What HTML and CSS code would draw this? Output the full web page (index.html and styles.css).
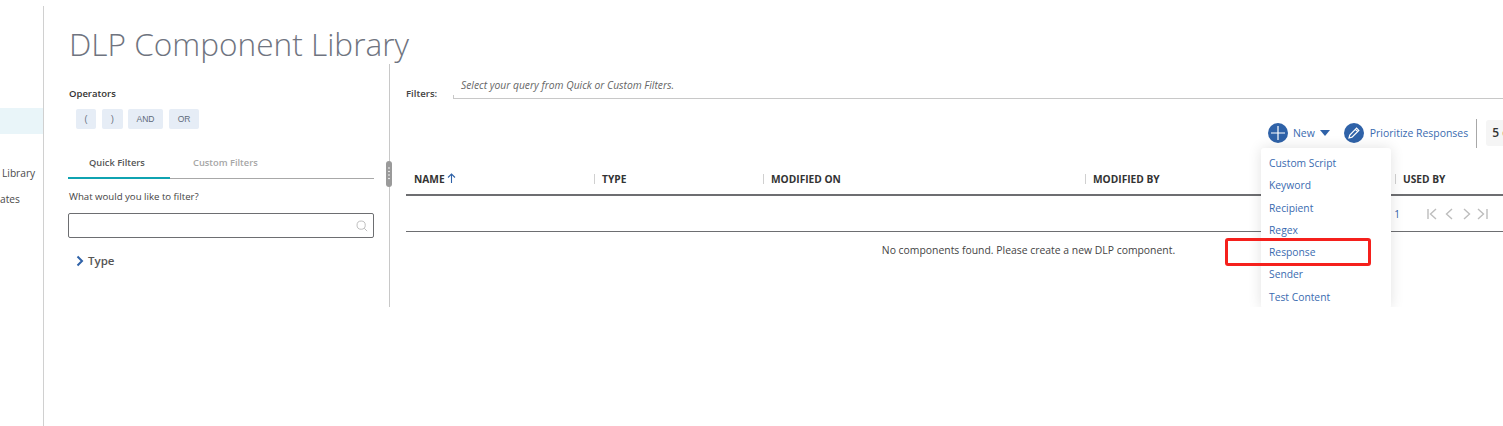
FILE: index.html
```html
<!DOCTYPE html>
<html lang="en">

<head>
    <meta charset="UTF-8">
    <title>DLP Component Library</title>
    <link rel="stylesheet" href="styles.css">
</head>

<body>
    <nav class="side-nav">
        <div class="nav-active"></div>
        <div class="nav-item nav-library">Library</div>
        <div class="nav-item nav-templates">ates</div>
    </nav>

    <main class="page">
        <h1>DLP Component Library</h1>

        <div class="workspace">
            <!-- Left filter panel -->
            <section class="filter-panel">
                <h4>Operators</h4>
                <div class="operators">
                    <button class="op-btn op-open">(</button>
                    <button class="op-btn op-close">)</button>
                    <button class="op-btn op-and">AND</button>
                    <button class="op-btn op-or">OR</button>
                </div>

                <div class="tabs">
                    <div class="tab tab-active">Quick Filters</div>
                    <div class="tab tab-custom">Custom Filters</div>
                </div>

                <label class="search-label">What would you like to filter?</label>
                <div class="search-box">
                    <svg width="12" height="12" viewBox="0 0 14 14" fill="none" stroke="#b4b4b4" stroke-width="1">
                        <circle cx="6" cy="6" r="4.8" />
                        <path d="M9.6 9.6 L13 13" />
                    </svg>
                </div>

                <div class="type-row">
                    <svg width="8" height="12" viewBox="0 0 8 12" fill="none" stroke="#2f62a8" stroke-width="2">
                        <path d="M1.5 1.5 L6 6 L1.5 10.5" />
                    </svg>
                    <span>Type</span>
                </div>
            </section>

            <div class="splitter">
                <div class="grip">
                    <svg width="6" height="26" viewBox="0 0 6 26" fill="#fff">
                        <circle cx="3" cy="7" r="0.8" />
                        <circle cx="3" cy="10.5" r="0.8" />
                        <circle cx="3" cy="14" r="0.8" />
                        <circle cx="3" cy="17.5" r="0.8" />
                    </svg>
                </div>
            </div>

            <!-- Results -->
            <section class="results">
                <div class="filters-bar">
                    <span class="filters-label">Filters:</span>
                    <div class="filters-query">Select your query from Quick or Custom Filters.</div>
                </div>

                <div class="toolbar">
                    <span class="round-icon">
                        <svg width="14" height="14" viewBox="0 0 14 14" stroke="#fff" stroke-width="1.2">
                            <path d="M7 0 V14 M0 7 H14" />
                        </svg>
                    </span>
                    <span class="tool-text tool-new">New</span>
                    <span class="caret"></span>
                    <span class="round-icon icon-edit">
                        <svg width="12" height="12" viewBox="0 0 12 12" fill="none" stroke="#fff" stroke-width="1.2">
                            <path d="M1 11 L1.8 8 L8.6 1.2 L10.8 3.4 L4 10.2 Z M7.4 2.4 L9.6 4.6" />
                        </svg>
                    </span>
                    <span class="tool-text">Prioritize Responses</span>
                    <span class="tool-divider"></span>
                    <span class="page-size">5 of</span>
                </div>

                <div class="table-head">
                    <div class="col col-name">
                        NAME
                        <svg width="9" height="10" viewBox="0 0 9 10" fill="none" stroke="#2f62a8" stroke-width="1.1">
                            <path d="M4.5 10 V1 M1 4.5 L4.5 1 L8 4.5" />
                        </svg>
                    </div>
                    <div class="col">TYPE</div>
                    <div class="col">MODIFIED ON</div>
                    <div class="col">MODIFIED BY</div>
                    <div class="col">USED BY</div>
                </div>

                <div class="pager">
                    <span class="pager-num">1</span>
                    <svg width="62" height="12" viewBox="0 0 62 12" fill="none" stroke="#bdbdbd" stroke-width="1.4">
                        <path d="M1 1 V11 M9 1 L3.5 6 L9 11" />
                        <path d="M25 1 L19.5 6 L25 11" />
                        <path d="M37 1 L42.5 6 L37 11" />
                        <path d="M51 1 L56.5 6 L51 11 M60 1 V11" />
                    </svg>
                </div>

                <p class="no-data">No components found. Please create a new DLP component.</p>
            </section>

            <ul class="new-menu">
                <li>Custom Script</li>
                <li>Keyword</li>
                <li>Recipient</li>
                <li>Regex</li>
                <li>Response</li>
                <li>Sender</li>
                <li>Test Content</li>
            </ul>
        </div>
    </main>

    <div class="red-box"></div>
</body>

</html>
```

FILE: styles.css
```css
html,
body {
    margin: 0;
    padding: 0;
    height: 426px;
    overflow: hidden;
    background: #fff;
}

body {
    font-family: "Open Sans", sans-serif;
    color: #333;
    display: flex;
}

/* Side nav */
.side-nav {
    width: 43px;
    margin-top: 6px;
    padding-top: 102px;
    height: 318px;
    border-right: 1px solid #d0d0d0;
    flex-shrink: 0;
}

.nav-active {
    height: 26px;
    background: #e9f5f9;
}

.nav-item {
    font-size: 10.2px;
    line-height: 16px;
    color: #4a4a4a;
    white-space: nowrap;
}

.nav-library {
    margin-top: 31px;
    padding-left: 2px;
}

.nav-templates {
    margin-top: 10px;
}

/* Page */
.page {
    flex: 1;
    min-width: 0;
}

h1 {
    margin: 21px 0 0 25px;
    height: 43px;
    font-size: 31.6px;
    line-height: 46px;
    font-weight: 300;
    color: #6f7480;
    white-space: nowrap;
}

.workspace {
    position: relative;
    display: flex;
    height: 243px;
    overflow: hidden;
}

/* Filter panel */
.filter-panel {
    width: 306px;
    margin-left: 24px;
    flex-shrink: 0;
}

h4 {
    margin: 23px 0 0 1px;
    font-size: 9.5px;
    line-height: 13px;
    font-weight: 600;
    color: #333;
}

.operators {
    display: flex;
    margin: 9px 0 0 8px;
}

.op-btn {
    height: 20px;
    padding: 0;
    border: none;
    border-radius: 2px;
    background: #e6edf6;
    font-family: "Liberation Sans", sans-serif;
    font-size: 8.5px;
    color: #5f6b7a;
}

.op-open {
    width: 20px;
    margin-right: 6px;
}

.op-close {
    width: 21px;
    margin-right: 5px;
}

.op-and {
    width: 35px;
    margin-right: 6px;
}

.op-or {
    width: 30px;
}

.tabs {
    display: flex;
    margin-top: 23px;
    height: 26px;
    border-bottom: 1px solid #a8a8a8;
}

.tab {
    width: 102px;
    padding-top: 1px;
    font-size: 9.3px;
    line-height: 20px;
    font-weight: 600;
    color: #a6a6a6;
    box-sizing: border-box;
}

.tab-active {
    padding-left: 21px;
    color: #555;
    height: 27px;
    border-bottom: 2px solid #0fa3b1;
}

.tab-custom {
    padding-left: 23px;
}

.search-label {
    display: block;
    margin: 11px 0 0 1px;
    font-size: 9.65px;
    line-height: 14px;
    color: #444;
}

.search-box {
    display: flex;
    align-items: center;
    justify-content: flex-end;
    height: 23px;
    margin-top: 9px;
    padding-right: 5px;
    border: 1px solid #6d6e71;
    border-radius: 2px;
}

.type-row {
    display: flex;
    align-items: center;
    gap: 4px;
    margin: 14px 0 0 8px;
    font-size: 11.5px;
    line-height: 18px;
    font-weight: 600;
    color: #555;
}

/* Splitter */
.splitter {
    position: relative;
    width: 1px;
    margin-left: 15px;
    background: #c8c8c8;
    flex-shrink: 0;
}

.grip {
    position: absolute;
    top: 97px;
    left: -3px;
    width: 6px;
    height: 26px;
    border-radius: 3px;
    background: #9a9a9a;
    display: flex;
}

/* Results */
.results {
    width: 1097px;
    margin-left: 16px;
    flex-shrink: 0;
}

.filters-bar {
    display: flex;
    align-items: flex-end;
    margin-top: 14px;
    height: 21px;
}

.filters-label {
    width: 47px;
    font-size: 9.6px;
    line-height: 11px;
    font-weight: 600;
    color: #444;
}

.filters-query {
    flex: 1;
    height: 20px;
    padding-left: 7px;
    border-bottom: 1px solid #c8c8c8;
    border-left: 1px solid #c8c8c8;
    border-image: linear-gradient(to bottom, transparent 80%, #c8c8c8 80%) 1;
    font-size: 10.3px;
    line-height: 15px;
    font-style: italic;
    color: #666;
}

.toolbar {
    display: flex;
    align-items: center;
    height: 30px;
    margin: 19px 0 0 862px;
    white-space: nowrap;
}

.round-icon {
    display: flex;
    align-items: center;
    justify-content: center;
    width: 20px;
    height: 20px;
    border-radius: 50%;
    background: #2f62a8;
    flex-shrink: 0;
}

.icon-edit {
    margin: 0 6px 0 14px;
}

.tool-text {
    font-size: 10.45px;
    color: #3a6bb0;
    flex-shrink: 0;
}

.tool-new {
    margin-left: 5px;
}

.caret {
    width: 0;
    height: 0;
    margin-left: 5px;
    border-left: 5.5px solid transparent;
    border-right: 5.5px solid transparent;
    border-top: 6px solid #2f62a8;
    flex-shrink: 0;
}

.tool-divider {
    width: 1px;
    height: 29px;
    margin: 0 9px 0 8px;
    background: #a8a8a8;
    flex-shrink: 0;
}

.page-size {
    height: 26px;
    padding-left: 6px;
    width: 60px;
    flex-shrink: 0;
    border-radius: 3px;
    background: #f5f5f5;
    font-size: 12px;
    line-height: 26px;
    font-weight: 600;
    color: #333;
}

.table-head {
    display: grid;
    grid-template-columns: 188px 169px 322px 310px 1fr;
    height: 33px;
    margin-top: 13px;
    border-bottom: 2px solid #6d6e71;
}

.col {
    align-self: center;
    margin-top: 2px;
    padding-left: 7px;
    font-size: 10.2px;
    font-weight: 700;
    line-height: 10px;
    color: #333;
    border-left: 1px solid #d0d0d0;
}

.col-name {
    padding-left: 8px;
    border-left: none;
}

.pager {
    display: flex;
    align-items: center;
    justify-content: flex-end;
    gap: 27px;
    height: 35px;
    padding-right: 14px;
    border-bottom: 1px solid #6d6e71;
}

.pager-num {
    font-size: 10px;
    color: #2f62a8;
}

.no-data {
    margin: 11px 0 0;
    padding-left: 148px;
    text-align: center;
    font-size: 10.4px;
    line-height: 14px;
    color: #444;
}

/* New dropdown */
.new-menu {
    position: absolute;
    top: 84px;
    left: 1217px;
    width: 130px;
    margin: 0;
    padding: 4px 0 0;
    list-style: none;
    background: #fff;
    border-radius: 3px;
    box-shadow: 0 0 14px rgba(0, 0, 0, 0.12);
}

.new-menu li {
    height: 22.3px;
    padding-left: 8px;
    font-size: 10.3px;
    line-height: 22px;
    color: #3a6bb0;
}

/* Annotation drawn over the screenshot */
.red-box {
    position: absolute;
    top: 238px;
    left: 1225px;
    width: 140px;
    height: 22px;
    border: 3px solid #f5201c;
    border-radius: 3px;
}
```
